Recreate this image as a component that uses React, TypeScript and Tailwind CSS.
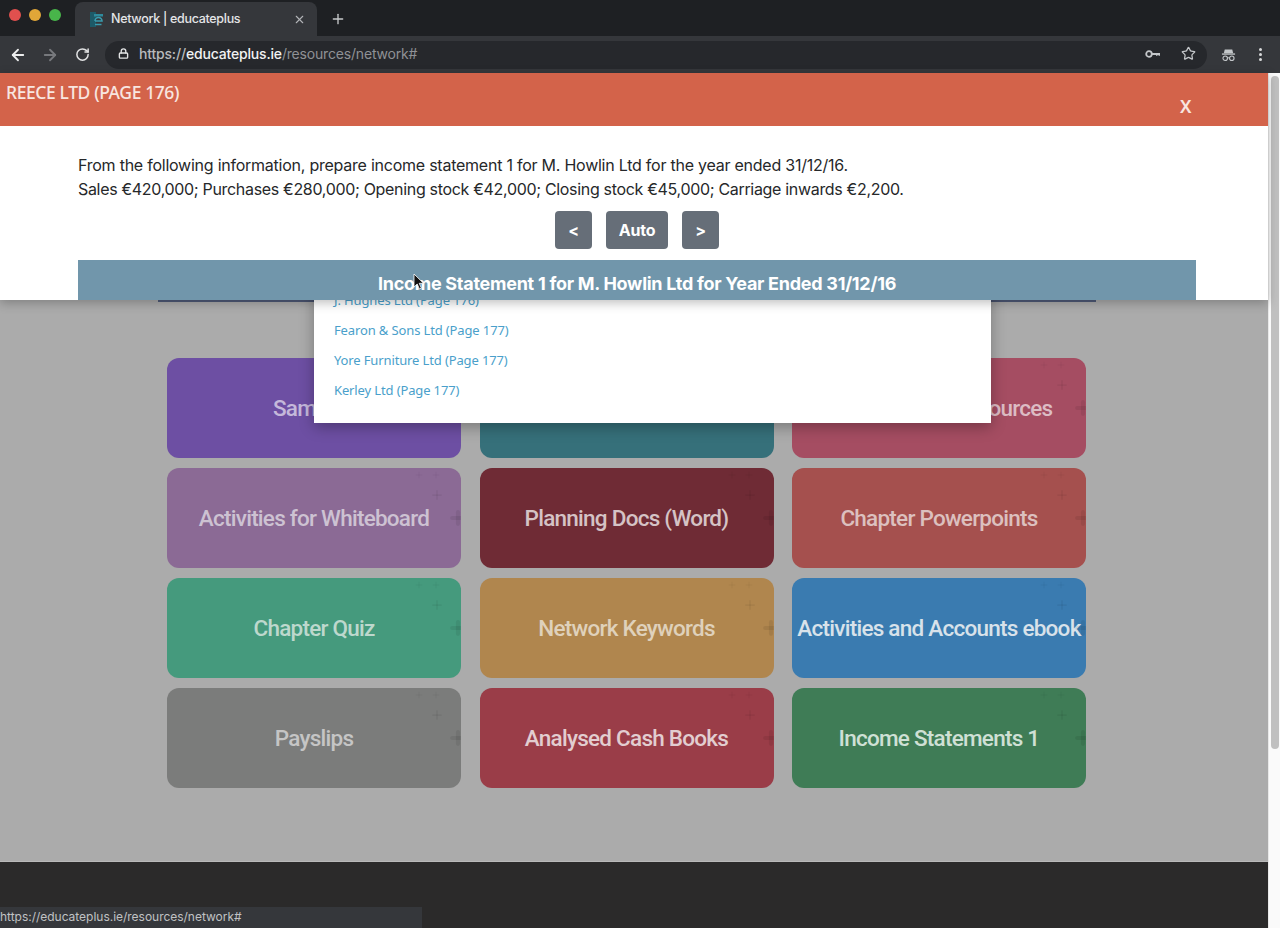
import { ArrowLeft, ArrowRight, Lock, Plus, RotateCw, Star, X } from "lucide-react"

const tiles = [
  { label: "Samples", color: "bg-[#6d4fa3]", text: "text-[#c4b8da]" },
  { label: "", color: "bg-[#36707a]", text: "text-[#b8cdd0]" },
  { label: "Teacher Web Resources", color: "bg-[#a54d62]", text: "text-[#dcbcc4]" },
  { label: "Activities for Whiteboard", color: "bg-[#8b6a95]", text: "text-[#cdc2d2]" },
  { label: "Planning Docs (Word)", color: "bg-[#6f2b35]", text: "text-[#d5c3c5]" },
  { label: "Chapter Powerpoints", color: "bg-[#a5504e]", text: "text-[#dcc0bf]" },
  { label: "Chapter Quiz", color: "bg-[#459a7d]", text: "text-[#bdd8cd]" },
  { label: "Network Keywords", color: "bg-[#b0864e]", text: "text-[#dfd1bb]" },
  { label: "Activities and Accounts ebook", color: "bg-[#3a7bb0]", text: "text-[#d8e2ea]" },
  { label: "Payslips", color: "bg-[#7b7c7b]", text: "text-[#c5c5c5]" },
  { label: "Analysed Cash Books", color: "bg-[#9a3d48]", text: "text-[#e2cdd0]" },
  { label: "Income Statements 1", color: "bg-[#3f7c56]", text: "text-[#cfe0d5]" },
]

const links = ["Fearon & Sons Ltd (Page 177)", "Yore Furniture Ltd (Page 177)", "Kerley Ltd (Page 177)"]

function Tile({ label, color, text }: { label: string; color: string; text: string }) {
  return (
    <div className={`relative h-[100px] rounded-xl overflow-hidden flex items-center justify-center pt-[2px] ${color}`}>
      <span className={`font-['Roboto'] font-medium text-[22.5px] tracking-[-0.75px] whitespace-nowrap ${text}`}>{label}</span>
      {/* plus marks */}
      <Plus size={14} strokeWidth={3} className="absolute top-[20px] right-[17px] text-black/5" />
      <Plus size={10} strokeWidth={2} className="absolute top-[2px] right-[37px] text-black/5" />
      <Plus size={10} strokeWidth={2} className="absolute top-[2px] right-[20px] text-black/5" />
      <Plus size={20} strokeWidth={5} className="absolute top-[40px] right-[-7px] text-black/[0.07]" />
    </div>
  )
}

function KeyIcon() {
  return (
    <svg width="15" height="8" viewBox="0 0 15 8" fill="none" className="text-[#c4c7ca]">
      <circle cx="4" cy="4" r="2.8" stroke="currentColor" strokeWidth="1.8" />
      <path d="M7 3h8v2.800h-1.500V5h-1v.8H11V5H7z" fill="currentColor" />
    </svg>
  )
}

function Incognito() {
  return (
    <svg width="15" height="14" viewBox="0 0 16 14" fill="none" className="text-[#c4c7ca]">
      <path d="M4 1h8l1 4H3z" fill="currentColor" />
      <path d="M1 6h14" stroke="currentColor" strokeWidth="1.4" />
      <circle cx="4.500" cy="10.500" r="2.400" stroke="currentColor" strokeWidth="1.200" />
      <circle cx="11.500" cy="10.500" r="2.400" stroke="currentColor" strokeWidth="1.200" />
      <path d="M7 10h2" stroke="currentColor" strokeWidth="1" />
    </svg>
  )
}

export default function App() {
  return (
    <div className="h-[928px] w-[1280px] overflow-hidden flex flex-col bg-[#1f2023] font-['Inter',sans-serif]">
      {/* TAB BAR */}
      <div className="h-[36px] flex items-end bg-[#1e2023] shrink-0">
        <div className="w-[75px] h-[36px] flex items-center gap-[8px] pl-[9px] pb-[6px]">
          <span className="w-3 h-3 rounded-full bg-[#e0504e]" />
          <span className="w-3 h-3 rounded-full bg-[#e0a638]" />
          <span className="w-3 h-3 rounded-full bg-[#48b54a]" />
        </div>
        <div className="w-[242px] h-[34px] bg-[#35373b] rounded-t-lg flex items-center pl-[15px] pr-[11px]">
          <svg width="14" height="17" viewBox="0 0 14 17" fill="none">
            <path d="M0 1h6v15H0z" fill="#1d5a68" />
            <path d="M4 5.500h9V3H4z" fill="#2f8a9c" />
            <path d="M5 10a3.500 3.500 0 1 1 7 0H5M11.500 13.500H5" stroke="#3a9db0" strokeWidth="1.600" />
          </svg>
          <span className="ml-[7px] text-[12.5px] text-[#e4e5e7] font-medium tracking-[-0.3px]">Network | educateplus</span>
          <X size={13} className="ml-auto text-[#b3b5b8]" />
        </div>
        <Plus size={16} className="ml-[13px] mb-[9px] text-[#c8cacc]" />
      </div>

      {/* ADDRESS BAR */}
      <div className="h-[37px] bg-[#35373b] shrink-0 flex items-center">
        <ArrowLeft size={18} strokeWidth={2.4} className="ml-[9px] text-[#eceded]" />
        <ArrowRight size={18} strokeWidth={2.4} className="ml-[14px] text-[#77797d]" />
        <RotateCw size={15} strokeWidth={2.4} className="ml-[16px] text-[#e2e3e4]" />
        <div className="ml-[15px] w-[1102px] h-[28px] rounded-full bg-[#26282c] flex items-center pl-[13px] pb-[2px]">
          <Lock size={11} strokeWidth={3} className="text-[#e2e3e4]" />
          <span className="ml-[10px] text-[14px] font-medium tracking-[-0.18px] text-[#b8babc]">
            https://<span className="text-[#f1f2f2]">educateplus.ie</span>
            <span className="text-[#8f9195] font-normal">/resources/network#</span>
          </span>
          <span className="ml-auto">
            <KeyIcon />
          </span>
          <Star size={15} strokeWidth={2} className="ml-[21px] mr-[11px] text-[#c4c7ca]" />
        </div>
        <div className="ml-[14px]">
          <Incognito />
        </div>
        <div className="ml-[23px] flex flex-col gap-[2px]">
          <span className="w-[3px] h-[3px] rounded-full bg-[#d8d9da]" />
          <span className="w-[3px] h-[3px] rounded-full bg-[#d8d9da]" />
          <span className="w-[3px] h-[3px] rounded-full bg-[#d8d9da]" />
        </div>
      </div>

      {/* PAGE */}
      <div className="flex-1 flex min-h-0">
        <div className="relative w-[1268px] bg-[#ababab] flex flex-col">
          {/* nav edge under the modal */}
          <div className="h-[229px] shrink-0 px-[158px] flex flex-col justify-end">
            <div className="h-[2px] w-[938px] bg-[#4f5a78]" />
          </div>

          {/* tiles */}
          <div className="pl-[167px] pt-[56px] w-[1086px]">
            <div className="grid grid-cols-[294px_294px_294px] gap-x-[18.5px] gap-y-[10px]">
              {tiles.map((t, i) => (
                <Tile key={i} {...t} />
              ))}
            </div>
          </div>

          {/* footer */}
          <div className="mt-auto h-[67px] bg-[#2b2a2a] border-t border-[#b9b9b9]" />

          {/* status url */}
          <div className="absolute left-0 bottom-0 w-[422px] h-[21px] bg-[#35373b] text-[12px] leading-[19px] text-[#c0c2c4] tracking-[-0.02px] whitespace-nowrap">
            https://educateplus.ie/resources/network#
          </div>

          {/* dropdown under the modal */}
          <div className="absolute left-[314px] top-[200px] w-[677px] h-[150px] bg-white shadow-[0_4px_14px_rgba(0,0,0,0.3)] pl-[20px] pt-[12px] font-['Noto_Sans'] text-[13px] tracking-[-0.13px] text-[#4a9fcb]">
            <div className="h-[30px] leading-[30px]">J. Hughes Ltd (Page 176)</div>
            {links.map(l => (
              <div key={l} className="h-[30px] leading-[30px]">{l}</div>
            ))}
          </div>

          {/* MODAL */}
          <div className="absolute top-0 left-0 w-full h-[227px] bg-white shadow-[0_3px_10px_rgba(0,0,0,0.25)]">
            <div className="relative h-[53px] bg-[#d3634a]">
              <span className="absolute left-[6px] top-[6px] font-['Noto_Sans'] font-medium text-[17.5px] tracking-[-0.4px] text-[#f8e6e0]">REECE LTD (PAGE 176)</span>
              <span className="absolute left-[1180px] top-[20px] font-['Noto_Sans'] font-semibold text-[18px] text-[#f8e6e0]">X</span>
            </div>
            <div className="px-[78px] pt-[27px] text-[16px] leading-[24px] text-[#26282a]">
              <p className="tracking-[-0.24px]">From the following information, prepare income statement 1 for M. Howlin Ltd for the year ended 31/12/16.</p>
              <p className="tracking-[-0.32px]">Sales €420,000; Purchases €280,000; Opening stock €42,000; Closing stock €45,000; Carriage inwards €2,200.</p>
            </div>
            <div className="mt-[10px] flex justify-center gap-[14px] pl-[6px]">
              <button className="w-[37px] h-[38px] rounded bg-[#666e78] text-white font-bold text-[16px] tracking-[-0.2px]">&lt;</button>
              <button className="w-[62px] h-[38px] rounded bg-[#666e78] text-white font-bold text-[16px] tracking-[-0.2px]">Auto</button>
              <button className="w-[37px] h-[38px] rounded bg-[#666e78] text-white font-bold text-[16px] tracking-[-0.2px]">&gt;</button>
            </div>
            <div className="mt-[11px] ml-[78px] w-[1118px] h-[40px] bg-[#7196ab] flex justify-center pt-[12px] text-[18px] leading-[24px] font-bold text-white tracking-[-0.27px]">
              Income Statement 1 for M. Howlin Ltd for Year Ended 31/12/16
            </div>
          </div>

          {/* cursor */}
          <svg width="12" height="18" viewBox="0 0 12 18" className="absolute left-[413px] top-[200px]">
            <path d="M1 1v13l3.200-3 2.200 5 2-.9-2.200-4.800H10.500z" fill="#111" stroke="#fff" strokeWidth="0.8" />
          </svg>
        </div>

        {/* SCROLLBAR */}
        <div className="w-[12px] bg-[#fafafa] border-l border-[#e8e8e8] flex justify-center pt-[3px]">
          <div className="w-[8px] h-[673px] rounded-full bg-[#c0c0c0]" />
        </div>
      </div>
    </div>
  )
}
